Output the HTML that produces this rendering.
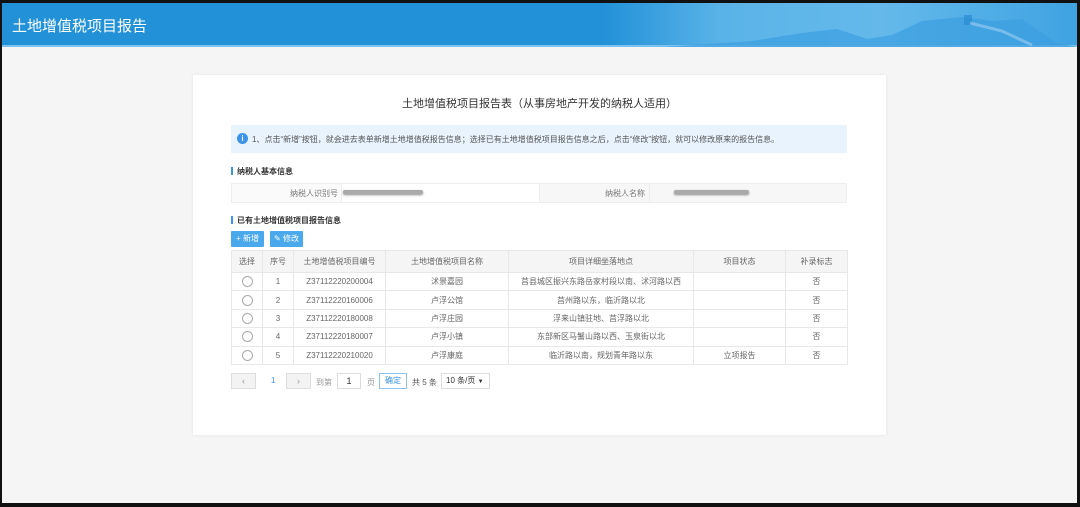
<!DOCTYPE html>
<html><head><meta charset="utf-8"><style>
*{margin:0;padding:0;box-sizing:border-box}
body{width:1080px;height:507px;background:#111;position:relative;overflow:hidden;font-family:"Liberation Sans","Noto Sans CJK SC",sans-serif;color:#555}
#scr{position:absolute;left:2px;top:3px;width:1075px;height:500px;background:#f5f5f5;overflow:hidden}
#hdr{position:absolute;left:0;top:0;width:1075px;height:44px;background:linear-gradient(90deg,#2291d8 0,#2291d8 600px,#5ab3e8 720px,#64b9ea 880px,#3fa3e2 1075px);border-bottom:2px solid #7cc4ef}
#hdr .t{position:absolute;left:10px;top:12px;color:#fff;font-size:15px}
.card{position:absolute;left:191px;top:72px;width:693px;height:360px;background:#fff;box-shadow:0 0 3px rgba(0,0,0,.08)}
.a{position:absolute;white-space:nowrap}
table{position:absolute;left:38px;top:175px;border-collapse:collapse;font-size:8px;color:#666}
td{border:1px solid #e8e8e8;height:18.4px;text-align:center}
tr.h td{background:#f5f5f5;height:22px}
.rd{display:inline-block;width:11px;height:11px;border:1px solid #aaa;border-radius:50%;vertical-align:middle}
.btn{position:absolute;height:16px;background:#4aa8ec;color:#fff;font-size:8px;line-height:16px;text-align:center;border-radius:1px}
.pg{position:absolute;height:16px;border:1px solid #ddd;font-size:9px;line-height:14px;text-align:center;background:#fff}
</style></head><body>
<div id="scr">
<div id="hdr"><div class="t">土地增值税项目报告</div>
<svg style="position:absolute;left:660px;top:0" width="415" height="44"><path d="M0 44 L90 38 L140 30 L175 26 L205 36 L230 32 L260 18 L300 14 L330 18 L360 16 L395 40 L415 44Z" fill="#3c9ee0" opacity=".7"/><rect x="302" y="12" width="8" height="10" fill="#2a8ad2" opacity=".7"/><path d="M308 20 L340 28 L370 42" stroke="#9ccff2" stroke-width="3" fill="none" opacity=".6"/></svg>
</div>
<div class="card">
<div class="a" style="left:0;width:693px;text-align:center;top:20px;font-size:11px;color:#333">土地增值税项目报告表（从事房地产开发的纳税人适用）</div>
<div class="a" style="left:38px;top:50px;width:616px;height:28px;background:#e9f3fd"></div>
<div class="a" style="left:44px;top:58px;width:11px;height:11px;border-radius:50%;background:#3b94e6;color:#fff;font-size:8px;line-height:11px;text-align:center;font-weight:bold">i</div>
<div class="a" style="left:59px;top:59px;font-size:8px;color:#555">1、点击“新增”按钮，就会进去表单新增土地增值税报告信息；选择已有土地增值税项目报告信息之后，点击“修改”按钮，就可以修改原来的报告信息。</div>
<div class="a" style="left:38px;top:92px;width:2px;height:8px;background:#3b94e6"></div>
<div class="a" style="left:44px;top:91px;font-size:8px;color:#333;font-weight:bold">纳税人基本信息</div>
<div class="a" style="left:38px;top:108px;width:616px;height:20px;border:1px solid #eee;background:#fff"></div>
<div class="a" style="left:39px;top:109px;width:110px;height:18px;background:#fafafa;border-right:1px solid #eee"></div>
<div class="a" style="left:346px;top:109px;width:111px;height:18px;background:#f7f7f7;border-left:1px solid #eee;border-right:1px solid #eee"></div>
<div class="a" style="left:457px;top:109px;width:196px;height:18px;background:#f7f7f7"></div>
<div class="a" style="left:97px;top:113px;font-size:8px;color:#777">纳税人识别号</div>
<div class="a" style="left:412px;top:113px;font-size:8px;color:#777">纳税人名称</div>
<div class="a" style="left:150px;top:115px;width:80px;height:4px;background:#aaa;border-radius:2px;box-shadow:0 1px 2px #888"></div>
<div class="a" style="left:481px;top:115px;width:75px;height:4px;background:#aaa;border-radius:2px;box-shadow:0 1px 2px #888"></div>
<div class="a" style="left:38px;top:141px;width:2px;height:8px;background:#3b94e6"></div>
<div class="a" style="left:44px;top:140px;font-size:8px;color:#333;font-weight:bold">已有土地增值税项目报告信息</div>
<div class="btn" style="left:38px;top:156px;width:33px">+ 新增</div>
<div class="btn" style="left:77px;top:156px;width:33px">✎ 修改</div>
<table>
<tr class="h"><td style="width:31px">选择</td><td style="width:31px">序号</td><td style="width:92px">土地增值税项目编号</td><td style="width:123px">土地增值税项目名称</td><td style="width:185px">项目详细坐落地点</td><td style="width:92px">项目状态</td><td style="width:62px">补录标志</td></tr>
<tr><td><span class="rd"></span></td><td>1</td><td>Z37112220200004</td><td>沭景嘉园</td><td>莒县城区振兴东路岳家村段以南、沭河路以西</td><td></td><td>否</td></tr>
<tr><td><span class="rd"></span></td><td>2</td><td>Z37112220160006</td><td>卢浮公馆</td><td>莒州路以东，临沂路以北</td><td></td><td>否</td></tr>
<tr><td><span class="rd"></span></td><td>3</td><td>Z37112220180008</td><td>卢浮庄园</td><td>浮来山镇驻地、莒浮路以北</td><td></td><td>否</td></tr>
<tr><td><span class="rd"></span></td><td>4</td><td>Z37112220180007</td><td>卢浮小镇</td><td>东部新区马鬐山路以西、玉泉街以北</td><td></td><td>否</td></tr>
<tr><td><span class="rd"></span></td><td>5</td><td>Z37112220210020</td><td>卢浮康庭</td><td>临沂路以南，规划青年路以东</td><td>立项报告</td><td>否</td></tr>
</table>
<div class="pg" style="left:38px;top:298px;width:25px;background:#f3f3f3;color:#999">‹</div>
<div class="a" style="left:78px;top:301px;font-size:8px;color:#3b94e6">1</div>
<div class="pg" style="left:93px;top:298px;width:25px;background:#f3f3f3;color:#999">›</div>
<div class="a" style="left:123px;top:302px;font-size:8px;color:#999">到第</div>
<div class="pg" style="left:144px;top:298px;width:24px;color:#333">1</div>
<div class="a" style="left:174px;top:302px;font-size:8px;color:#999">页</div>
<div class="pg" style="left:186px;top:298px;width:28px;border-color:#8cc4ee;color:#3b94e6;font-size:8px">确定</div>
<div class="a" style="left:219px;top:302px;font-size:8px;color:#555">共 5 条</div>
<div class="pg" style="left:248px;top:298px;width:49px;color:#333;font-size:8px;text-align:left;padding-left:4px">10 条/页 <span style="font-size:6px">▼</span></div>
</div>
</div>
</body></html>
